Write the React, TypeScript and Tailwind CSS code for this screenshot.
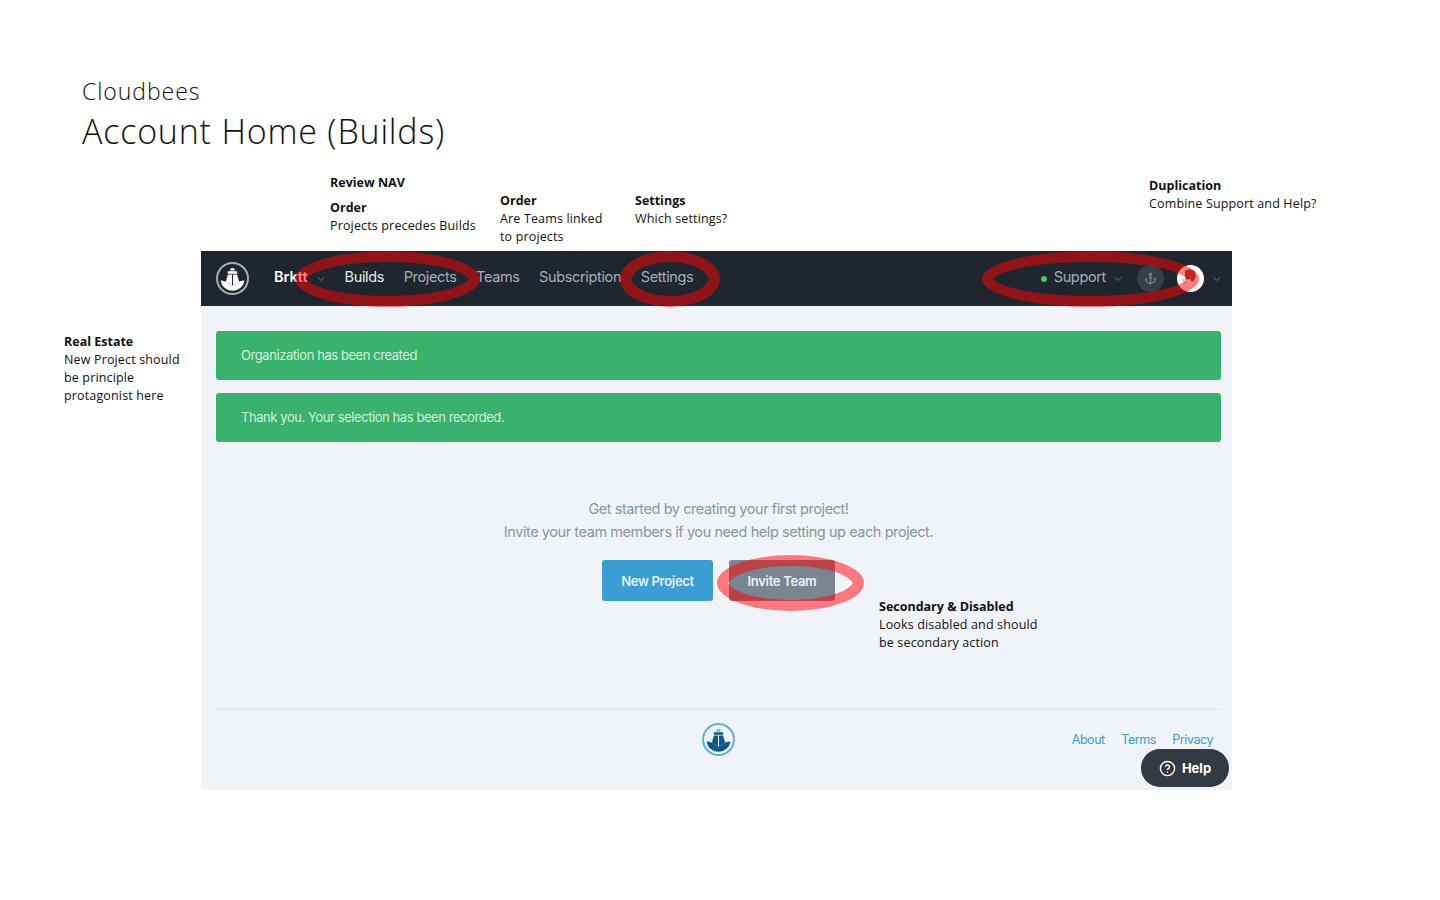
import React from 'react';
import { Anchor, ChevronDown, CircleHelp } from 'lucide-react';

const noteFont = "font-['Open_Sans',sans-serif]";

const ShipLogo: React.FC<{ className: string; domeClassName?: string; ringClassName: string }> = ({
  className,
  domeClassName = '',
  ringClassName,
}) => (
  <svg viewBox="0 0 32 32" className={className} fill="currentColor">
    <circle cx="16" cy="16" r="15" fill="none" stroke="currentColor" strokeWidth="1.9" className={ringClassName} />
    <path d="M13.6 8.2a2.4 2.4 0 0 1 4.8 0z" className={domeClassName} />
    <rect x="11.4" y="9" width="9.2" height="2.4" rx="0.5" />
    <path d="M15.5 12.1h-4L9.600 19l5.900 3.500z" />
    <path d="M16.500 12.100h4L22.400 19l-5.900 3.500z" />
    <path d="M4.600 18c3.400 0 6 1.300 8.400 3l3 1.900 3-1.900c2.400-1.700 5-3 8.400-3-.6 6-5.400 9.800-11.400 9.800S5.200 24 4.600 18z" />
  </svg>
);

// hand-drawn looking markup: round outside, pointed inside
const Ring: React.FC<{ className: string; width: number; height: number; stroke: number }> = ({
  className,
  width,
  height,
  stroke,
}) => {
  const cy = height / 2;
  const rx = width / 2;
  const l = stroke;
  const r = width - stroke;
  const lift = (cy - stroke) * 1.33;
  const inset = (r - l) * 0.12;
  const d =
    `M0 ${cy}A${rx} ${cy} 0 0 1 ${width} ${cy}A${rx} ${cy} 0 0 1 0 ${cy}Z` +
    `M${l} ${cy}C${l + inset} ${cy - lift} ${r - inset} ${cy - lift} ${r} ${cy}` +
    `C${r - inset} ${cy + lift} ${l + inset} ${cy + lift} ${l} ${cy}Z`;
  return (
    <svg className={`absolute pointer-events-none ${className}`} width={width} height={height} viewBox={`0 0 ${width} ${height}`}>
      <path d={d} fill="#ff0000" fillOpacity="0.5" fillRule="evenodd" />
    </svg>
  );
};

const Note: React.FC<{ className: string; title: string; lines: string[] }> = ({ className, title, lines }) => (
  <div className={`absolute text-[12.5px] leading-[18px] text-[#111] whitespace-nowrap ${noteFont} ${className}`}>
    <div className="font-bold">{title}</div>
    {lines.map((line) => (
      <div key={line} className="tracking-[0.15px]">
        {line}
      </div>
    ))}
  </div>
);

const App: React.FC = () => {
  return (
    <div className="relative w-full h-[900px] bg-white overflow-hidden">
      {/* board title */}
      <div className={`pl-[82px] pt-[75px] h-[251px] text-[#111] font-light ${noteFont}`}>
        <div className="text-[23px] leading-[32px] tracking-[0.95px]">Cloudbees</div>
        <div className="text-[34px] leading-[48px] tracking-[0.8px]">Account Home (Builds)</div>
      </div>

      {/* app mockup */}
      <div className="ml-[201px] w-[1031px] h-[539px] bg-[#f0f4f8] flex flex-col font-['Inter',sans-serif]">
        <div className="h-[55px] bg-[#1f262f] flex items-center pl-[15px] pr-[9px] text-[14.5px] tracking-[-0.35px] text-[#a8afb7]">
          <ShipLogo className="w-[33px] h-[33px] text-white" ringClassName="text-[#a8afb7]" />
          <span className="ml-[25px] mb-[3px] font-semibold tracking-normal text-white">Brktt</span>
          <ChevronDown className="ml-[7px] w-[12px] h-[12px] text-[#6a727b]" />
          <nav className="ml-[18px] mb-[3px] flex gap-[19.5px]">
            <span className="text-[#e8ebee]">Builds</span>
            <span>Projects</span>
            <span>Teams</span>
            <span>Subscription</span>
            <span>Settings</span>
          </nav>
          <div className="ml-auto flex items-center">
            <span className="w-[6px] h-[6px] rounded-full bg-[#48c774]" />
            <span className="ml-[7px] mb-[3px]">Support</span>
            <ChevronDown className="ml-[6px] w-[12px] h-[12px] text-[#6a727b]" />
            <span className="ml-[13px] w-[27px] h-[27px] rounded-full bg-[#383e46] flex items-center justify-center">
              <Anchor className="w-[13px] h-[13px] text-[#818790]" />
            </span>
            <span className="ml-[13px] w-[27px] h-[27px] rounded-full bg-white overflow-hidden">
              <svg viewBox="0 0 27 27" className="w-[27px] h-[27px]">
                <path d="M8 6c2-2 7-2 9 0 2 2 2 6 1 8l-3 3-2-3-4 1-1-4z" fill="#5a0a10" fillOpacity="0.75" />
                <path d="M4 14l4-1 2 4-3 3z" fill="#5a0a10" fillOpacity="0.2" />
              </svg>
            </span>
            <ChevronDown className="ml-[7px] w-[12px] h-[12px] text-[#6a727b]" />
          </div>
        </div>

        <div className="flex-1 flex flex-col pl-[15px] pr-[11px]">
          <div className="mt-[25px] flex flex-col gap-[13px] text-[13px] tracking-[-0.43px] text-[#d3efdf]">
            <div className="h-[49px] rounded-[3px] bg-[#38b26c] flex items-center px-[25px]">
              Organization has been created
            </div>
            <div className="h-[49px] rounded-[3px] bg-[#38b26c] flex items-center px-[25px]">
              Thank you. Your selection has been recorded.
            </div>
          </div>

          <div className="mt-[55px] text-center text-[14.5px] leading-[23px] tracking-[-0.43px] text-[#8b949e]">
            <div>Get started by creating your first project!</div>
            <div>Invite your team members if you need help setting up each project.</div>
          </div>

          <div className="mt-[17px] flex justify-center gap-[16px] text-[13px] font-semibold tracking-[-0.3px] text-[#e9f2f7]">
            <button className="w-[111px] h-[41px] pt-[2px] rounded-[3px] bg-[#3a9dd4]">New Project</button>
            <button className="w-[106px] h-[41px] pt-[2px] rounded-[3px] bg-[#7b8591]">Invite Team</button>
          </div>

          <div className="mt-[107px] border-t-2 border-[#e7ebef] grid grid-cols-[1fr_auto_1fr] items-center pt-[13px]">
            <div />
            <ShipLogo
              className="w-[33px] h-[33px] text-[#0f5a85]"
              ringClassName="text-[#62b2d8]"
              domeClassName="text-[#62b2d8]"
            />
            <div className="flex justify-end gap-[16.5px] pt-[2px] pr-[8px] text-[12.5px] tracking-[-0.45px] text-[#3a9dd4]">
              <span>About</span>
              <span>Terms</span>
              <span>Privacy</span>
            </div>
          </div>
        </div>
      </div>

      {/* help pill */}
      <div className="absolute left-[1141px] top-[749px] w-[88px] h-[38px] rounded-full bg-[#343a44] flex items-center justify-center gap-[6px] text-[13px] font-bold text-white font-['Inter',sans-serif]">
        <CircleHelp className="w-[17px] h-[17px]" />
        <span className="mt-[1px]">Help</span>
      </div>

      {/* review markup */}
      <Ring className="left-[295px] top-[251px]" width={185} height={56} stroke={11} />
      <Ring className="left-[620px] top-[251px]" width={100} height={56} stroke={11} />
      <Ring className="left-[982px] top-[251px]" width={217} height={56} stroke={11} />
      <Ring className="left-[717px] top-[555px]" width={147} height={56} stroke={11} />

      <Note className="left-[330px] top-[174px]" title="Review NAV" lines={[]} />
      <Note className="left-[330px] top-[199px]" title="Order" lines={['Projects precedes Builds']} />
      <Note className="left-[500px] top-[192px]" title="Order" lines={['Are Teams linked', 'to projects']} />
      <Note className="left-[635px] top-[192px]" title="Settings" lines={['Which settings?']} />
      <Note className="left-[1149px] top-[177px]" title="Duplication" lines={['Combine Support and Help?']} />
      <Note
        className="left-[64px] top-[333px]"
        title="Real Estate"
        lines={['New Project should', 'be principle', 'protagonist here']}
      />
      <Note
        className="left-[879px] top-[598px]"
        title="Secondary & Disabled"
        lines={['Looks disabled and should', 'be secondary action']}
      />
    </div>
  );
};

export default App;
